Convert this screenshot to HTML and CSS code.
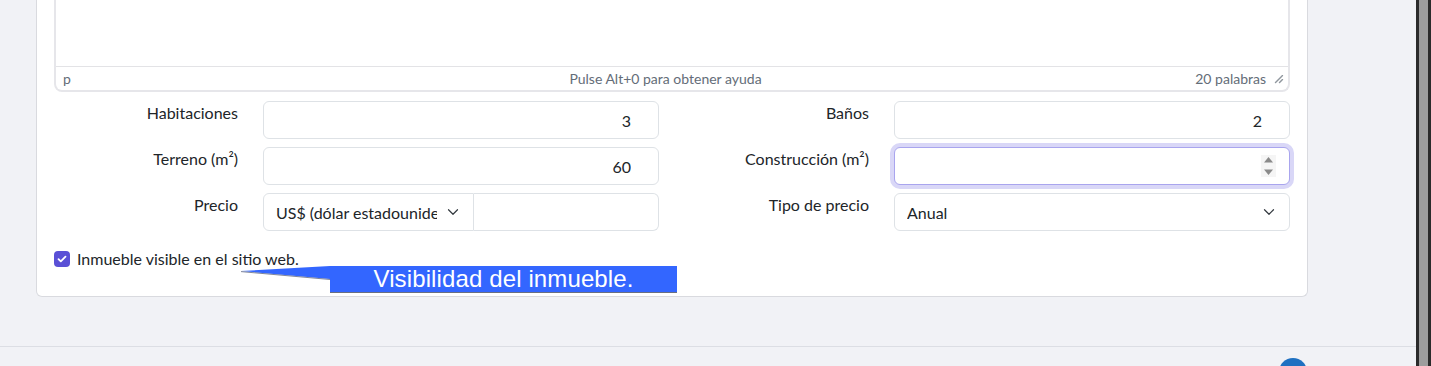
FILE: index.html
```html
<!DOCTYPE html>
<html lang="es">
<head>
  <meta charset="UTF-8">
  <meta name="viewport" content="width=device-width, initial-scale=1.0">
  <title>Inmueble</title>
  <link rel="stylesheet" href="styles.css">
</head>
<body>
  <div class="page">
    <div class="main">
      <div class="content">
        <div class="card">

          <div class="editor">
            <div class="editor-body"></div>
            <div class="statusbar">
              <span class="path">p</span>
              <span class="help">Pulse Alt+0 para obtener ayuda</span>
              <span class="status-right">
                <span class="words">20 palabras</span>
                <svg class="grip" width="10" height="10" viewBox="0 0 10 10">
                  <path d="M8.1 1.1A.5.5 0 1 1 9 2l-7 7A.5.5 0 1 1 1 8l7-7zM8.1 5.1A.5.5 0 1 1 9 6l-3 3A.5.5 0 1 1 5 8l3-3z"/>
                </svg>
              </span>
            </div>
          </div>

          <div class="fields">
            <label class="field-label">Habitaciones</label>
            <input class="form-control" type="text" value="3">
            <label class="field-label">Baños</label>
            <input class="form-control" type="text" value="2">

            <label class="field-label">Terreno (m²)</label>
            <input class="form-control" type="text" value="60">
            <label class="field-label">Construcción (m²)</label>
            <div class="focus-wrap">
              <input class="form-control is-focused" type="text" value="">
              <span class="caret"></span>
              <svg class="spinner" width="15" height="22" viewBox="0 0 15 22">
                <rect width="15" height="22" fill="#f5f5f5"/>
                <path d="M3 7.5 7.5 2 12 7.5z" fill="#8a8a8a"/>
                <path d="M3 14.5 7.5 20 12 14.5z" fill="#8a8a8a"/>
              </svg>
            </div>

            <label class="field-label">Precio</label>
            <div class="input-group">
              <select class="form-select currency">
                <option>US$ (dólar estadounidense)</option>
              </select>
              <input class="form-control amount" type="text" value="">
            </div>
            <label class="field-label">Tipo de precio</label>
            <select class="form-select">
              <option>Anual</option>
            </select>
          </div>

          <div class="check">
            <span class="checkbox">
              <svg width="10" height="8" viewBox="0 0 10 8">
                <path d="M1.5 4.2 3.8 6.4 8.5 1.6" fill="none" stroke="#fff" stroke-width="1.8" stroke-linecap="round" stroke-linejoin="round"/>
              </svg>
            </span>
            <span>Inmueble visible en el sitio web.</span>
          </div>

          <!-- anotación sobre la captura -->
          <svg class="tip-arrow" width="90" height="18" viewBox="0 0 90 18">
            <polygon points="1,7 90,2 90,15" fill="#3366ff"/>
            <line x1="1" y1="7.6" x2="90" y2="15.5" stroke="#4b5470" stroke-width="1" opacity="0.7"/>
          </svg>
          <div class="tooltip">Visibilidad del inmueble.</div>
        </div>
      </div>

      <div class="footer">
        <span class="footer-dot"></span>
      </div>
    </div>
    <div class="scrollbar"></div>
  </div>
</body>
</html>
```

FILE: styles.css
```css
* {
  box-sizing: border-box;
}

body {
  margin: 0;
  height: 366px;
  overflow: hidden;
  background-color: #f1f2f6;
  font-family: 'Lato', 'Noto Sans', sans-serif;
  font-size: 16px;
  color: #212529;
}

.page {
  display: flex;
  height: 100%;
}

.main {
  flex: 1;
}

.scrollbar {
  width: 15px;
  background-color: #9d9d9d;
  border-left: 3px solid #2b2b2b;
  border-right: 3px solid #2b2b2b;
}

.content {
  padding: 0 108px 0 36px;
}

.card {
  position: relative;
  background-color: #fff;
  border: 1px solid #d9dadf;
  border-top: 0;
  border-radius: 0 0 6px 6px;
  padding: 0 17px 25px;
}

/* editor */
.editor {
  border: 2px solid #e6e6ea;
  border-top: 0;
  border-radius: 0 0 8px 8px;
}

.editor-body {
  height: 66px;
}

.statusbar {
  display: grid;
  grid-template-columns: 1fr auto 1fr;
  align-items: center;
  height: 24px;
  border-top: 1px solid #e3e3e6;
  padding: 0 4px 0 7px;
  font-size: 14px;
  color: #646d78;
}

.help {
  margin-right: 16px;
}

.status-right {
  justify-self: end;
  display: flex;
  align-items: center;
  gap: 8px;
}

.grip {
  fill: rgba(34, 47, 62, 0.5);
}

/* fields */
.fields {
  display: grid;
  grid-template-columns: 209px 396px 235px 396px;
  row-gap: 8px;
  margin-top: 9px;
}

.field-label {
  text-align: right;
  padding-right: 25px;
  line-height: 24px;
}

.form-control {
  width: 100%;
  height: 38px;
  padding: 6px 27px 6px 12px;
  font: inherit;
  color: inherit;
  text-align: right;
  background-color: #fff;
  border: 1px solid #dee2e6;
  border-radius: 6px;
  outline: none;
}

.form-select {
  appearance: none;
  width: 100%;
  height: 38px;
  padding: 6px 36px 6px 12px;
  font: inherit;
  color: inherit;
  border: 1px solid #dee2e6;
  border-radius: 6px;
  background-color: #fff;
  background-image: url("data:image/svg+xml,%3csvg xmlns='http://www.w3.org/2000/svg' viewBox='0 0 16 16'%3e%3cpath fill='none' stroke='%23343a40' stroke-linecap='round' stroke-linejoin='round' stroke-width='1.6' d='m2 5 6 6 6-6'/%3e%3c/svg%3e");
  background-repeat: no-repeat;
  background-position: right 12px center;
  background-size: 16px 12px;
  white-space: nowrap;
  overflow: hidden;
}

.input-group {
  display: flex;
}

.currency {
  width: 211px;
  flex-shrink: 0;
  border-radius: 6px 0 0 6px;
}

.amount {
  flex: 1;
  border-left: 0;
  border-radius: 0 6px 6px 0;
}

.focus-wrap {
  position: relative;
}

.is-focused {
  border-color: #a9a5ee;
  box-shadow: 0 0 0 4px #d9d7f7;
}

.caret {
  position: absolute;
  right: 28px;
  top: 8px;
  width: 1px;
  height: 22px;
  border-left: 1px solid #111;
}

.spinner {
  position: absolute;
  right: 14px;
  top: 8px;
}

/* checkbox */
.check {
  display: flex;
  align-items: center;
  gap: 7px;
  margin-top: 16px;
  line-height: 24px;
}

.checkbox {
  display: flex;
  align-items: center;
  justify-content: center;
  width: 16px;
  height: 16px;
  border-radius: 4px;
  background-color: #5a50d6;
}

/* annotation */
.tooltip {
  position: absolute;
  left: 293px;
  top: 266px;
  width: 347px;
  height: 26px;
  background-color: #3366ff;
  box-shadow: 0 1px 0 #6a6f80;
  color: #fff;
  font-family: 'Liberation Sans', Arial, sans-serif;
  font-size: 24px;
  letter-spacing: 0.12px;
  line-height: 26px;
  text-align: center;
}

.tip-arrow {
  position: absolute;
  left: 203px;
  top: 264px;
}

/* footer */
.footer {
  display: flex;
  justify-content: flex-end;
  height: 20px;
  overflow: hidden;
  margin-top: 49px;
  padding-right: 109px;
  border-top: 1px solid #dcdee4;
}

.footer-dot {
  width: 28px;
  height: 28px;
  margin-top: 11px;
  border-radius: 50%;
  background-color: #1f70c1;
  flex-shrink: 0;
}
```
